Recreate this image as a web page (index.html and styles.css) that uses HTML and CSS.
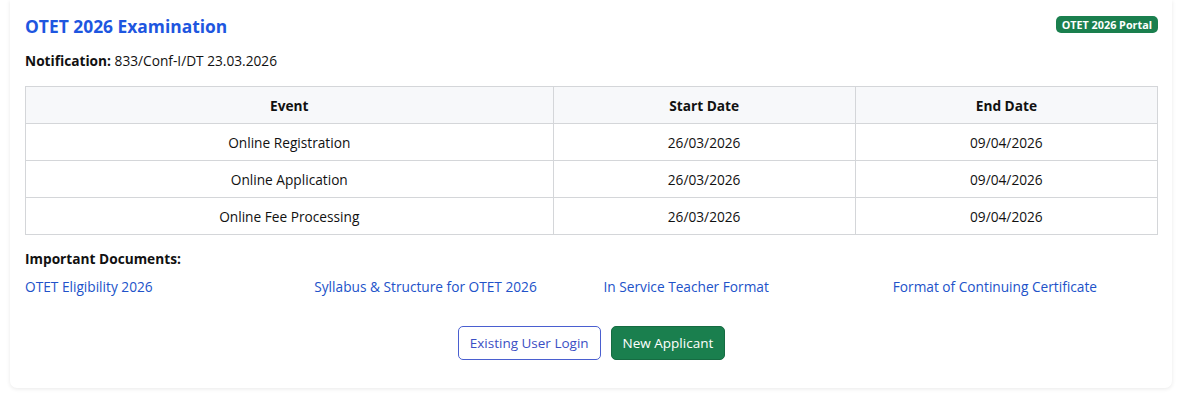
FILE: index.html
```html
<!DOCTYPE html>
<html lang="en">
<head>
  <meta charset="UTF-8">
  <title>OTET 2026 Examination</title>
  <link rel="stylesheet" href="styles.css">
</head>
<body>
  <!-- Exam card -->
  <div class="exam-card">
    <div class="card-head">
      <h4 class="exam-title">OTET 2026 Examination</h4>
      <span class="portal-badge">OTET 2026 Portal</span>
    </div>
    <p class="notification"><strong>Notification:</strong> 833/Conf-I/DT 23.03.2026</p>

    <!-- Schedule table -->
    <table class="schedule">
      <thead>
        <tr>
          <th class="col-event">Event</th>
          <th>Start Date</th>
          <th>End Date</th>
        </tr>
      </thead>
      <tbody>
        <tr>
          <td>Online Registration</td>
          <td>26/03/2026</td>
          <td>09/04/2026</td>
        </tr>
        <tr>
          <td>Online Application</td>
          <td>26/03/2026</td>
          <td>09/04/2026</td>
        </tr>
        <tr>
          <td>Online Fee Processing</td>
          <td>26/03/2026</td>
          <td>09/04/2026</td>
        </tr>
      </tbody>
    </table>

    <!-- Documents -->
    <h6 class="docs-title">Important Documents:</h6>
    <div class="docs-row">
      <a href="#">OTET Eligibility 2026</a>
      <a href="#">Syllabus &amp; Structure for OTET 2026</a>
      <a href="#">In Service Teacher Format</a>
      <a href="#">Format of Continuing Certificate</a>
    </div>

    <div class="actions">
      <button class="btn btn-outline">Existing User Login</button>
      <button class="btn btn-success">New Applicant</button>
    </div>
  </div>
</body>
</html>
```

FILE: styles.css
```css
:root {
  --title-blue: #1e56e0;
  --link-blue: #2152c9;
  --green: #1a7f4e;
  --border: #d4d6d9;
  --head-bg: #f7f8fa;
  --text: #111111;
}

body {
  margin: 0;
  font-family: 'Open Sans', 'Noto Sans', sans-serif;
  color: var(--text);
  background: #ffffff;
}

.exam-card {
  margin: 0 28px 9px 10px;
  padding: 14px 14px 28px 15px;
  background: #ffffff;
  border-radius: 0 0 7px 7px;
  box-shadow: 0 1px 4px rgba(0, 0, 0, 0.09);
}

.card-head {
  display: flex;
  justify-content: space-between;
  align-items: flex-start;
}

.exam-title {
  margin: 0;
  font-size: 17.4px;
  font-weight: 700;
  line-height: 24px;
  color: var(--title-blue);
}

.portal-badge {
  margin-top: 2px;
  padding: 1px 6px;
  font-size: 10.8px;
  font-weight: 700;
  line-height: 15px;
  color: #ffffff;
  background: var(--green);
  border-radius: 5px;
}

.notification {
  margin: 13px 0 15px;
  font-size: 13.7px;
  line-height: 20px;
}

.schedule {
  width: 100%;
  border-collapse: collapse;
  font-size: 13.7px;
}

.schedule th,
.schedule td {
  height: 36px;
  padding: 0 8px;
  text-align: center;
  border: 1px solid var(--border);
}

.schedule th {
  background: var(--head-bg);
  font-weight: 700;
}

.schedule .col-event {
  width: 46.6%;
}

.docs-title {
  margin: 14px 0 0;
  font-size: 13.7px;
  font-weight: 700;
  line-height: 20px;
}

.docs-row {
  display: grid;
  grid-template-columns: repeat(4, 1fr);
  margin: 8px -24px 0 0;
}

.docs-row a {
  font-size: 13.7px;
  line-height: 20px;
  color: var(--link-blue);
  text-decoration: none;
}

.actions {
  display: flex;
  justify-content: center;
  gap: 10px;
  margin-top: 29px;
}

.btn {
  height: 34px;
  padding: 0 11px;
  font-family: inherit;
  font-size: 13.5px;
  border-radius: 5px;
  cursor: pointer;
}

.btn-outline {
  color: #3b4fc4;
  background: #ffffff;
  border: 1px solid #4a5fd0;
}

.btn-success {
  color: #ffffff;
  background: var(--green);
  border: 1px solid #166b42;
}
```
